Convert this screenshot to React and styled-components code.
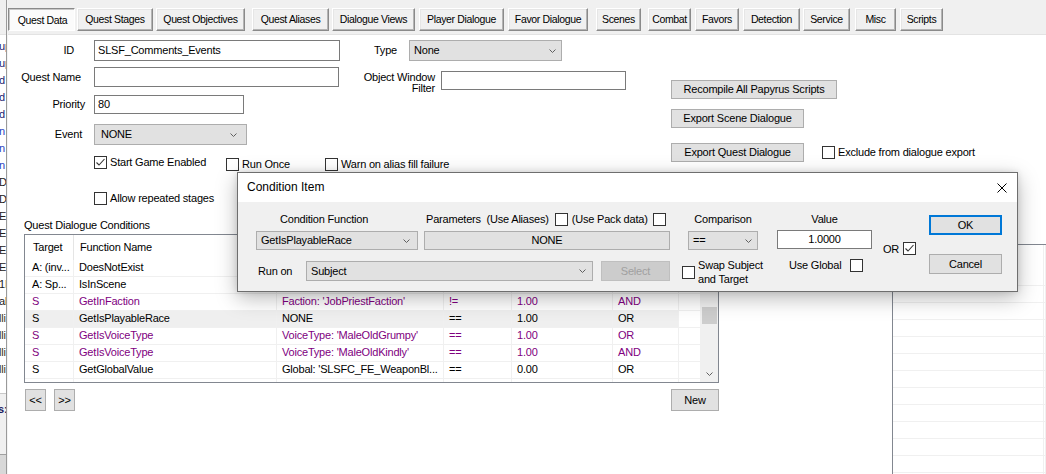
import React from 'react';
import styled, { createGlobalStyle } from 'styled-components';

const GlobalStyle = createGlobalStyle`
  html, body { margin: 0; padding: 0; background: #fff; }
  body {
    font-family: "Liberation Sans", Arial, sans-serif;
    font-size: 11px;
    color: #000;
    overflow: hidden;
  }
  *, *::before, *::after { box-sizing: border-box; }
`;

const PURPLE = '#800080';

/* ---------- window frame ---------- */
const Window = styled.div`
  display: flex;
  width: 1046px;
  height: 474px;
  overflow: hidden;
  letter-spacing: -0.2px;
  line-height: 13px;
`;

const Side = styled.div`
  width: 8px;
  flex: none;
  display: flex;
  border-right: 1px solid #f4f4f4;
`;
const SidePane = styled.div`
  flex: 1;
  display: flex;
  flex-direction: column;
  border-right: 1px solid #9a9a9a;
  overflow: hidden;
`;
const SideTop = styled.div`
  height: 35px;
  flex: none;
  background: #f0f0f0;
  border-bottom: 1px solid #e3e3e3;
`;
const SideList = styled.div`
  height: 358px;
  flex: none;
  background: #fff;
  padding-top: 3px;
`;
const SideItem = styled.div`
  height: 17px;
  line-height: 17px;
  white-space: nowrap;
  color: ${p => p.$c};
  margin-left: -1px;
`;
const SideFoot = styled.div`
  flex: 1;
  background: #f0f0f0;
  border-top: 1px solid #c8c8c8;
  display: flex;
  flex-direction: column;
`;
const SideFootText = styled.div`
  margin-top: 9px;
  color: #1a1a60;
  font-weight: bold;
  margin-left: -2px;
  white-space: nowrap;
`;
const SideScroll = styled.div`
  margin-top: auto;
  height: 20px;
  background: #d8d8d8;
  border-top: 1px solid #a0a0a0;
`;

const Main = styled.div`
  flex: 1;
  display: flex;
  flex-direction: column;
  min-width: 0;
`;

/* ---------- tabs ---------- */
const TabBar = styled.div`
  height: 35px;
  flex: none;
  background: #f0f0f0;
  border-bottom: 1px solid #e3e3e3;
  display: flex;
  align-items: flex-start;
  padding-top: 8px;
  font-size: 10.5px;
  letter-spacing: -0.35px;
`;
const Tab = styled.div`
  flex: none;
  width: ${p => p.$w}px;
  margin-left: ${p => p.$ml}px;
  height: 23px;
  display: flex;
  align-items: center;
  justify-content: center;
  white-space: nowrap;
  padding: ${p => (p.$active ? '1px 0 0 2px' : '0 0 1px 0')};
  background: ${p => (p.$active ? '#fbfbfb' : '#f0f0f0')};
  border: 1px solid;
  border-color: ${p => (p.$active ? '#8a8a8a #ffffff #ffffff #8a8a8a' : '#ffffff #8a8a8a #8a8a8a #ffffff')};
  box-shadow: ${p => (p.$active ? 'inset 1px 1px #c8c8c8' : 'inset -1px -1px #b4b4b4, inset 1px 1px #e6e6e6')};
`;

/* ---------- generic controls ---------- */
const TextBox = styled.div`
  flex: none;
  width: ${p => p.$w}px;
  height: ${p => p.$h}px;
  border: 1px solid #7a7a7a;
  background: #fff;
  display: flex;
  align-items: center;
  justify-content: ${p => (p.$center ? 'center' : 'flex-start')};
  padding-left: ${p => (p.$center ? 0 : 3)}px;
  white-space: nowrap;
  overflow: hidden;
`;
const ComboBox = styled.div`
  flex: none;
  width: ${p => p.$w}px;
  height: ${p => p.$h}px;
  margin-left: ${p => p.$ml || 0}px;
  border: 1px solid #adadad;
  background: #e1e1e1;
  display: flex;
  align-items: center;
  justify-content: ${p => (p.$center ? 'center' : 'space-between')};
  padding: 0 ${p => p.$pr || 0}px 0 ${p => p.$pl || 0}px;
  white-space: nowrap;
`;
const Btn = styled.div`
  flex: none;
  width: ${p => p.$w}px;
  height: ${p => p.$h || 19}px;
  margin-top: ${p => p.$mt || 0}px;
  margin-left: ${p => p.$ml || 0}px;
  background: ${p => (p.$disabled ? '#cccccc' : '#e1e1e1')};
  border: ${p => (p.$default ? '2px solid #0078d7' : `1px solid ${p.$disabled ? '#bfbfbf' : '#adadad'}`)};
  color: ${p => (p.$disabled ? '#a0a0a0' : '#000')};
  display: flex;
  align-items: center;
  justify-content: center;
  white-space: nowrap;
`;
const CheckBoxSq = styled.span`
  flex: none;
  width: 13px;
  height: 13px;
  border: 1px solid #333;
  background: #fff;
  display: inline-flex;
  align-items: center;
  justify-content: center;
`;
const CheckItem = styled.div`
  flex: none;
  display: flex;
  align-items: center;
  gap: 3px;
  width: ${p => (p.$w ? `${p.$w}px` : 'auto')};
  margin-top: ${p => p.$mt || 0}px;
  margin-left: ${p => p.$ml || 0}px;
  white-space: nowrap;
`;

function Chevron() {
  return (
    <svg width="7" height="4" viewBox="0 0 7 4">
      <path d="M0.5 0.5 L3.5 3.5 L6.5 0.5" fill="none" stroke="#606060" strokeWidth="1" />
    </svg>
  );
}
function Combo({ w, h, value, pl = 5, pr = 7, ml }) {
  return (
    <ComboBox $w={w} $h={h} $pl={pl} $pr={pr} $ml={ml}>
      <span>{value}</span>
      <Chevron />
    </ComboBox>
  );
}
function Check({ checked }) {
  return (
    <CheckBoxSq>
      {checked && (
        <svg width="11" height="11" viewBox="0 0 11 11">
          <path d="M1.5 5.5 L4 8 L9.5 2" fill="none" stroke="#333" strokeWidth="1.1" />
        </svg>
      )}
    </CheckBoxSq>
  );
}

/* ---------- content: top form ---------- */
const Content = styled.div`
  position: relative;
  flex: 1;
  display: flex;
  flex-direction: column;
  background: #fff;
`;
const Top = styled.div`
  display: flex;
  padding-top: 5px;
  flex: none;
`;
const LeftBlock = styled.div`
  width: 618px;
  flex: none;
  display: flex;
  flex-direction: column;
`;
const Fields = styled.div`
  display: flex;
`;
const FieldCol = styled.div`
  width: ${p => p.$w}px;
  flex: none;
  display: flex;
  flex-direction: column;
`;
const FieldRow = styled.div`
  display: flex;
  align-items: ${p => (p.$top ? 'flex-start' : 'center')};
  margin-top: ${p => p.$mt || 0}px;
`;
const FieldLabel = styled.div`
  flex: none;
  width: ${p => p.$w}px;
  padding-right: ${p => p.$pr}px;
  padding-top: ${p => p.$pt || 0}px;
  text-align: right;
  line-height: ${p => p.$lh || 13}px;
  white-space: nowrap;
`;
const CheckRow = styled.div`
  display: flex;
  align-items: flex-start;
  padding-left: 86px;
  height: ${p => p.$h}px;
  margin-top: ${p => p.$mt}px;
`;
const ActionCol = styled.div`
  flex: none;
  margin-left: 45px;
  padding-top: 40px;
  display: flex;
  flex-direction: column;
`;
const ActionRow = styled.div`
  display: flex;
  align-items: flex-start;
  margin-top: ${p => p.$mt}px;
`;

/* ---------- content: lower ---------- */
const Lower = styled.div`
  flex: 1;
  display: flex;
  padding-left: 16px;
  margin-top: 13px;
  min-height: 0;
`;
const ConditionsPane = styled.div`
  width: 695px;
  flex: none;
  display: flex;
  flex-direction: column;
`;
const SectionLabel = styled.div`
  height: 14px;
  line-height: 14px;
  margin-bottom: 2px;
`;
const Table = styled.div`
  height: 149px;
  border: 1px solid #828790;
  display: flex;
  overflow: hidden;
`;
const Grid = styled.div`
  flex: 1;
  display: grid;
  grid-template-columns: 49px 203px 167px 68px 101px 66px 1fr;
  grid-auto-rows: 17px;
  grid-template-rows: 25px;
  align-content: start;
`;
const HeadCell = styled.div`
  height: 25px;
  display: flex;
  align-items: center;
  padding-left: ${p => (p.$first ? 8 : 6)}px;
  border-right: 1px solid #e5e5e5;
  white-space: nowrap;
`;
const Cell = styled.div`
  display: flex;
  align-items: center;
  padding-left: ${p => (p.$first ? 7 : 5)}px;
  padding-bottom: 1px;
  border-right: 1px solid #f0f0f0;
  border-bottom: 1px solid #f0f0f0;
  color: ${p => p.$color || '#000'};
  background: ${p => (p.$sel ? '#efefef' : '#fff')};
  white-space: nowrap;
  overflow: hidden;
`;
const ScrollBar = styled.div`
  width: 17px;
  flex: none;
  background: #f0f0f0;
  display: flex;
  flex-direction: column;
`;
const ScrollArrow = styled.div`
  height: 17px;
  flex: none;
  display: flex;
  align-items: center;
  justify-content: center;
  transform: ${p => (p.$up ? 'rotate(180deg)' : 'none')};
`;
const ScrollTrack = styled.div`
  flex: 1;
  display: flex;
  flex-direction: column;
`;
const Thumb = styled.div`
  margin: 55px 1px 0;
  height: 17px;
  background: #cdcdcd;
`;
const PagerRow = styled.div`
  display: flex;
  justify-content: space-between;
  align-items: flex-start;
  margin-top: 6px;
  padding-left: 1px;
`;
const PagerGroup = styled.div`
  display: flex;
  gap: 8px;
`;
const RightList = styled.div`
  flex: 1;
  margin-left: 173px;
  margin-top: 26px;
  border-left: 1px solid #828790;
  border-top: 1px solid #828790;
  background: #fff;
  display: grid;
  grid-template-columns: 151px 1fr;
  grid-template-rows: 24px;
  grid-auto-rows: 17px;
  align-content: start;
  overflow: hidden;
`;
const ListCell = styled.div`
  border-right: 1px solid #f0f0f0;
  border-bottom: ${p => (p.$head ? 'none' : '1px solid #f0f0f0')};
`;

/* ---------- dialog ---------- */
const Dialog = styled.div`
  position: absolute;
  left: 229px;
  top: 137px;
  width: 781px;
  height: 120px;
  border: 1px solid #6e6e6e;
  background: #f0f0f0;
  box-shadow: 0 6px 20px rgba(0, 0, 0, 0.28), 0 0 6px rgba(0, 0, 0, 0.12);
  display: flex;
  flex-direction: column;
`;
const TitleBar = styled.div`
  height: 29px;
  flex: none;
  background: #fff;
  display: flex;
  align-items: center;
  justify-content: space-between;
  padding: 0 10px 0 9px;
  font-size: 12px;
  letter-spacing: 0;
`;
const DialogBody = styled.div`
  flex: 1;
  display: flex;
  align-items: flex-start;
  padding: 10px 0 0 18px;
`;
const DCol = styled.div`
  flex: none;
  width: ${p => p.$w}px;
  margin-left: ${p => p.$ml || 0}px;
  padding-top: ${p => p.$pt || 0}px;
  display: flex;
  flex-direction: column;
  gap: ${p => p.$gap || 0}px;
`;
const DRow = styled.div`
  display: flex;
  align-items: center;
  height: ${p => p.$h}px;
  margin-top: ${p => p.$mt || 0}px;
  white-space: nowrap;
`;
const DLabel = styled.div`
  flex: none;
  width: ${p => (p.$w ? `${p.$w}px` : 'auto')};
  padding-left: ${p => p.$pl || 0}px;
  margin-right: ${p => p.$mr || 0}px;
  text-align: ${p => (p.$center ? 'center' : 'left')};
  line-height: 14px;
  white-space: nowrap;
`;

const sideItems = [
  ['up', '#1a1a70'], ['up', '#1a1a70'], ['d', '#1a1a70'], ['d', '#1a1a70'], ['d', '#1a1a70'],
  ['n :', '#1f3fbf'], ['n :', '#1f3fbf'], ['n :', '#1f3fbf'], ['D', '#202020'], ['D', '#202020'],
  ['E', '#202020'], ['E', '#202020'], ['E', '#202020'], ['E', '#202020'], ['1F', '#202020'],
  ['ab', '#202020'], ['lli', '#3a3a20'], ['lli', '#3a3a20'], ['lli', '#3a3a20'], ['lli', '#3a3a20'],
];

const tabs = [
  ['Quest Data', 8, 74],
  ['Quest Stages', 77, 152],
  ['Quest Objectives', 156, 244],
  ['Quest Aliases', 252, 328],
  ['Dialogue Views', 332, 414],
  ['Player Dialogue', 419, 503],
  ['Favor Dialogue', 508, 587],
  ['Scenes', 596, 640],
  ['Combat', 648, 690],
  ['Favors', 695, 738],
  ['Detection', 743, 799],
  ['Service', 803, 849],
  ['Misc', 855, 895],
  ['Scripts', 900, 942],
];

/* only the first two headers are visible beside the dialog */
const heads = ['Target', 'Function Name', '', '', '', '', ''];

const rows = [
  ['A: (inv...', 'DoesNotExist', '', '', '', ''],
  ['A: Sp...', 'IsInScene', '', '', '', ''],
  ['S', 'GetInFaction', "Faction: 'JobPriestFaction'", '!=', '1.00', 'AND', PURPLE],
  ['S', 'GetIsPlayableRace', 'NONE', '==', '1.00', 'OR', null, true],
  ['S', 'GetIsVoiceType', "VoiceType: 'MaleOldGrumpy'", '==', '1.00', 'OR', PURPLE],
  ['S', 'GetIsVoiceType', "VoiceType: 'MaleOldKindly'", '==', '1.00', 'AND', PURPLE],
  ['S', 'GetGlobalValue', "Global: 'SLSFC_FE_WeaponBl...", '==', '0.00', 'OR'],
  ['', '', '', '', '', ''],
];

export default function App() {
  let prevRight = 7;
  return (
    <>
      <GlobalStyle />
      <Window>
        <Side>
          <SidePane>
            <SideTop />
            <SideList>
              {sideItems.map(([t, c], i) => (
                <SideItem key={i} $c={c}>{t}</SideItem>
              ))}
            </SideList>
            <SideFoot>
              <SideFootText>s:</SideFootText>
              <SideScroll />
            </SideFoot>
          </SidePane>
        </Side>

        <Main>
          <TabBar>
            {tabs.map(([label, l, r], i) => {
              const ml = l - prevRight - 1;
              prevRight = r;
              return (
                <Tab key={label} $w={r - l + 1} $ml={ml} $active={i === 0}>
                  {label}
                </Tab>
              );
            })}
          </TabBar>

          <Content>
            <Top>
              <LeftBlock>
                <Fields>
                  <FieldCol $w={332}>
                    <FieldRow>
                      <FieldLabel $w={86} $pr={20}>ID</FieldLabel>
                      <TextBox $w={246} $h={21}>SLSF_Comments_Events</TextBox>
                    </FieldRow>
                    <FieldRow $mt={6}>
                      <FieldLabel $w={86} $pr={13}>Quest Name</FieldLabel>
                      <TextBox $w={245} $h={20} />
                    </FieldRow>
                    <FieldRow $mt={8}>
                      <FieldLabel $w={86} $pr={9}>Priority</FieldLabel>
                      <TextBox $w={150} $h={19}>80</TextBox>
                    </FieldRow>
                    <FieldRow $mt={10}>
                      <FieldLabel $w={86} $pr={12}>Event</FieldLabel>
                      <Combo w={153} h={21} value="NONE" pl={6} pr={9} />
                    </FieldRow>
                  </FieldCol>
                  <FieldCol $w={286}>
                    <FieldRow>
                      <FieldLabel $w={69} $pr={12}>Type</FieldLabel>
                      <Combo w={153} h={21} value="None" pl={4} pr={5} />
                    </FieldRow>
                    <FieldRow $mt={10} $top>
                      <FieldLabel $w={101} $pr={6} $pt={1} $lh={11}>
                        Object Window<br />Filter
                      </FieldLabel>
                      <TextBox $w={185} $h={19} />
                    </FieldRow>
                  </FieldCol>
                </Fields>
                <CheckRow $h={15} $mt={11}>
                  <CheckItem $w={132}>
                    <Check checked />
                    <span>Start Game Enabled</span>
                  </CheckItem>
                  <CheckItem $w={99} $mt={2}>
                    <Check />
                    <span>Run Once</span>
                  </CheckItem>
                  <CheckItem $mt={2}>
                    <Check />
                    <span>Warn on alias fill failure</span>
                  </CheckItem>
                </CheckRow>
                <CheckRow $h={13} $mt={21}>
                  <CheckItem>
                    <Check />
                    <span>Allow repeated stages</span>
                  </CheckItem>
                </CheckRow>
              </LeftBlock>

              <ActionCol>
                <Btn $w={166}>Recompile All Papyrus Scripts</Btn>
                <Btn $w={133} $mt={10}>Export Scene Dialogue</Btn>
                <ActionRow $mt={15}>
                  <Btn $w={133}>Export Quest Dialogue</Btn>
                  <CheckItem $ml={18} $mt={3}>
                    <Check />
                    <span>Exclude from dialogue export</span>
                  </CheckItem>
                </ActionRow>
              </ActionCol>
            </Top>

            <Lower>
              <ConditionsPane>
                <SectionLabel>Quest Dialogue Conditions</SectionLabel>
                <Table>
                  <Grid>
                    {heads.map((h, i) => (
                      <HeadCell key={i} $first={i === 0}>{h}</HeadCell>
                    ))}
                    {rows.map((r, ri) =>
                      [0, 1, 2, 3, 4, 5, 6].map(ci => (
                        <Cell
                          key={`${ri}-${ci}`}
                          $first={ci === 0}
                          $color={r[6]}
                          $sel={r[7] && ci < 6}
                        >
                          {ci < 6 ? r[ci] : ''}
                        </Cell>
                      ))
                    )}
                  </Grid>
                  <ScrollBar>
                    <ScrollArrow $up>
                      <Chevron />
                    </ScrollArrow>
                    <ScrollTrack>
                      <Thumb />
                    </ScrollTrack>
                    <ScrollArrow>
                      <Chevron />
                    </ScrollArrow>
                  </ScrollBar>
                </Table>
                <PagerRow>
                  <PagerGroup>
                    <Btn $w={21} $h={22}>&lt;&lt;</Btn>
                    <Btn $w={21} $h={22}>&gt;&gt;</Btn>
                  </PagerGroup>
                  <Btn $w={48} $h={22}>New</Btn>
                </PagerRow>
              </ConditionsPane>

              <RightList>
                <ListCell $head />
                <ListCell $head />
                {Array.from({ length: 26 }).map((_, i) => (
                  <ListCell key={i} />
                ))}
              </RightList>
            </Lower>

            <Dialog>
              <TitleBar>
                <span>Condition Item</span>
                <svg width="10" height="10" viewBox="0 0 10 10">
                  <path d="M0.5 0.5 L9.5 9.5 M9.5 0.5 L0.5 9.5" stroke="#000" strokeWidth="1" />
                </svg>
              </TitleBar>
              <DialogBody>
                <DCol $w={414}>
                  <DRow $h={14}>
                    <DLabel $w={168} $pl={24}>Condition Function</DLabel>
                    <DLabel $pl={2} $mr={6}>Parameters&nbsp; (Use Aliases)</DLabel>
                    <Check />
                    <DLabel $pl={4} $mr={5}>(Use Pack data)</DLabel>
                    <Check />
                  </DRow>
                  <DRow $h={19} $mt={5}>
                    <Combo w={162} h={19} value="GetIsPlayableRace" pl={4} pr={7} />
                    <ComboBox $w={246} $h={19} $ml={6} $center>NONE</ComboBox>
                  </DRow>
                  <DRow $h={20} $mt={11}>
                    <DLabel $w={50} $pl={2}>Run on</DLabel>
                    <Combo w={287} h={20} value="Subject" pl={4} pr={6} />
                    <Btn $w={69} $h={20} $ml={8} $disabled>Select</Btn>
                  </DRow>
                </DCol>

                <DCol $w={76} $ml={12}>
                  <DRow $h={14}>
                    <DLabel $w={76} $pl={6} $center>Comparison</DLabel>
                  </DRow>
                  <DRow $h={19} $mt={5}>
                    <Combo w={70} h={19} value="==" pl={4} pr={5} ml={6} />
                  </DRow>
                  <DRow $h={28} $mt={8}>
                    <Check />
                    <DLabel $pl={3}>Swap Subject<br />and Target</DLabel>
                  </DRow>
                </DCol>

                <DCol $w={95} $ml={19}>
                  <DRow $h={14}>
                    <DLabel $w={95} $center>Value</DLabel>
                  </DRow>
                  <DRow $h={19} $mt={4}>
                    <TextBox $w={95} $h={19} $center>1.0000</TextBox>
                  </DRow>
                  <DRow $h={14} $mt={9}>
                    <DLabel $pl={12} $mr={9}>Use Global</DLabel>
                    <Check />
                  </DRow>
                </DCol>

                <DCol $w={31} $ml={11} $pt={30}>
                  <DRow $h={13}>
                    <DLabel $mr={4}>OR</DLabel>
                    <Check checked />
                  </DRow>
                </DCol>

                <DCol $w={73} $ml={15} $pt={3} $gap={19}>
                  <Btn $w={73} $h={20} $default>OK</Btn>
                  <Btn $w={73} $h={20}>Cancel</Btn>
                </DCol>
              </DialogBody>
            </Dialog>
          </Content>
        </Main>
      </Window>
    </>
  );
}
